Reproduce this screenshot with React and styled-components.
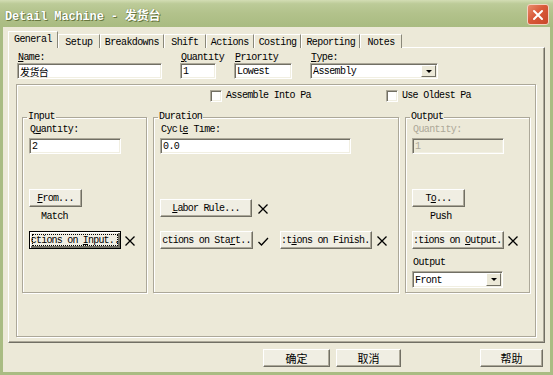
import React from "react";
import styled, { createGlobalStyle, css } from "styled-components";

const UI_FONT = `"Liberation Mono", "Noto Sans CJK SC", monospace`;
const CJK_FONT = `"Noto Sans CJK SC", "Noto Sans", sans-serif`;

const GlobalStyle = createGlobalStyle`
  html, body {
    margin: 0;
    padding: 0;
    background: #ece9d8;
  }
  body {
    font-family: ${UI_FONT};
    font-size: 10px;
  }
  * {
    box-sizing: border-box;
  }
`;

const Window = styled.div`
  width: 553px;
  height: 375px;
  display: flex;
  flex-direction: column;
  overflow: hidden;
`;

const TitleBar = styled.div`
  height: 27px;
  flex: none;
  display: flex;
  align-items: center;
  justify-content: space-between;
  padding: 2px 4px 0 5px;
  background: linear-gradient(
    to bottom,
    #d3ddb4 0%,
    #bccb98 14%,
    #b2c28b 50%,
    #a9bb81 100%
  );
`;

const Title = styled.div`
  font: bold 12px ${UI_FONT};
  letter-spacing: -0.15px;
  color: #fff;
  text-shadow: 1px 1px 0 #67773f, 0 0 1px #67773f;
`;

const CloseButton = styled.div`
  width: 22px;
  height: 21px;
  border-radius: 3px;
  border: 1px solid #f4d2c2;
  background: linear-gradient(135deg, #e88d6d 0%, #d95a3a 45%, #c9462a 100%);
  display: flex;
  align-items: center;
  justify-content: center;
`;

const Frame = styled.div`
  flex: 1;
  display: flex;
  flex-direction: column;
  background: #ece9d8;
  border: 3px solid #a9bc83;
  border-top: none;
  padding: 4px 5px 0 5px;
`;

const TabStrip = styled.div`
  display: flex;
  align-items: flex-end;
  height: 17px;
  margin-bottom: -1px;
  position: relative;
  z-index: 1;
`;

const Tab = styled.div`
  height: ${(p) => (p.$active ? 17 : 14)}px;
  min-width: 42px;
  padding: ${(p) => (p.$active ? "0 5px 2px" : "1px 4px 0")};
  display: flex;
  align-items: center;
  justify-content: center;
  background: #ece9d8;
  border: 1px solid;
  border-color: #fff #8a887a transparent #fff;
  border-bottom: none;
  white-space: nowrap;
  letter-spacing: -0.6px;
  color: #000;
`;

const TabPanel = styled.div`
  height: 296px;
  border: 1px solid;
  border-color: #fff #716f64 #716f64 #fff;
  box-shadow: inset -1px -1px 0 #aca899;
  padding: 5px 8px 0 7px;
`;

const FieldRow = styled.div`
  display: flex;
  gap: 18px;
  padding-left: 1px;
`;

const Field = styled.div`
  display: flex;
  flex-direction: column;
  width: ${(p) => p.$w}px;
`;

const Label = styled.div`
  height: ${(p) => (p.$clip ? 9 : 10)}px;
  margin-bottom: ${(p) => (p.$clip ? 1 : 0)}px;
  line-height: 10px;
  padding-left: 1px;
  white-space: nowrap;
  overflow-x: visible;
  overflow-y: clip;
  letter-spacing: -0.6px;
  color: ${(p) => (p.$disabled ? "#aca899" : "#000")};
  margin-top: ${(p) => p.$top || 0}px;
`;

const sunken = css`
  border: 1px solid;
  border-color: #aca899 #fff #fff #aca899;
  box-shadow: inset 1px 1px 0 #716f64, inset -1px -1px 0 #f1efe2;
`;

const TextInput = styled.input`
  ${sunken};
  width: ${(p) => p.$w || "100%"};
  height: 16px;
  margin: ${(p) => p.$top || 0}px 0 0;
  padding: 1px 2px 0;
  font: 10px ${UI_FONT};
  letter-spacing: -0.6px;
  color: ${(p) => (p.disabled ? "#aca899" : "#000")};
  background: ${(p) => (p.disabled ? "#ece9d8" : "#fff")};
  outline: none;
  &:disabled {
    -webkit-text-fill-color: #aca899;
  }
`;

const Select = styled.div`
  ${sunken};
  width: ${(p) => p.$w || "100%"};
  height: ${(p) => p.$h || 17}px;
  margin-top: ${(p) => p.$top || 0}px;
  display: flex;
  align-items: center;
  background: #fff;
  padding: 0 1px 0 2px;
  letter-spacing: -0.6px;
`;

const SelectValue = styled.span`
  flex: 1;
  padding-top: 1px;
`;

const SelectArrow = styled.span`
  width: 15px;
  height: calc(100% - 2px);
  display: flex;
  align-items: center;
  justify-content: center;
  background: #ece9d8;
  border: 1px solid;
  border-color: #fff #716f64 #716f64 #fff;
  &::after {
    content: "";
    border-left: 3px solid transparent;
    border-right: 3px solid transparent;
    border-top: 3px solid #000;
  }
`;

const BigBox = styled.div`
  margin-top: 5px;
  height: 253px;
  border: 1px solid #aca899;
  box-shadow: inset 1px 1px 0 #fff, 1px 1px 0 #fff;
  padding: 5px 5px 0 5px;
`;

const CheckRow = styled.div`
  display: grid;
  grid-template-columns: 176px auto;
  padding-left: 188px;
  height: 12px;
`;

const Check = styled.div`
  display: flex;
  align-items: center;
  gap: 4px;
  white-space: nowrap;
  letter-spacing: -0.7px;
  line-height: 12px;
`;

const CheckBox = styled.span`
  ${sunken};
  width: 12px;
  height: 12px;
  background: #fff;
  flex: none;
`;

const GroupRow = styled.div`
  display: flex;
  gap: 6px;
  margin-top: 10px;
`;

const Group = styled.fieldset`
  margin: 0;
  padding: 0 6px;
  min-width: 0;
  width: ${(p) => p.$w}px;
  height: 181px;
  border: 1px solid #aca899;
  box-shadow: inset 1px 1px 0 #fff, 1px 1px 0 #fff;
  display: flex;
  flex-direction: column;
  align-items: flex-start;
`;

const Legend = styled.legend`
  padding: 0 1px;
  margin-left: -2px;
  line-height: 10px;
  height: 10px;
  letter-spacing: -0.6px;
  color: #000;
`;

const Button = styled.button`
  width: ${(p) => p.$w}px;
  height: 18px;
  flex: none;
  margin: ${(p) => p.$top || 0}px 0 0;
  padding: 0;
  font: 10px ${UI_FONT};
  letter-spacing: -0.8px;
  color: #000;
  background: #f0eee3;
  border: 1px solid;
  border-color: #fff #716f64 #716f64 #fff;
  box-shadow: inset -1px -1px 0 #aca899;
  white-space: nowrap;
  overflow: hidden;
  ${(p) =>
    p.$focused &&
    css`
      border-color: #000;
      box-shadow: inset 1px 1px 0 #fff, inset -2px -2px 0 #716f64;
      outline: 1px dotted #000;
      outline-offset: -4px;
    `}
`;

const Caption = styled.div`
  margin: 5px 0 0 ${(p) => p.$left}px;
  line-height: 10px;
  letter-spacing: -0.6px;
`;

const ActionRow = styled.div`
  display: flex;
  align-items: center;
  margin-top: ${(p) => p.$top}px;
`;

const Mark = styled.svg`
  width: 12px;
  height: 12px;
  flex: none;
  margin: 2px ${(p) => p.$after || 0}px 0 ${(p) => p.$before || 4}px;
`;

const ButtonBar = styled.div`
  display: flex;
  gap: 6px;
  margin-top: 6px;
  padding: 0 2px 0 255px;
`;

const DialogButton = styled(Button)`
  font: 11px ${CJK_FONT};
  letter-spacing: 0;
  margin-left: ${(p) => (p.$push ? "auto" : 0)};
`;

const XMark = (props) => (
  <Mark viewBox="0 0 12 12" {...props}>
    <path d="M1.5 1.5 L10.5 10.5 M10.5 1.5 L1.5 10.5" stroke="#000" strokeWidth="1.3" fill="none" />
  </Mark>
);

const CheckMark = (props) => (
  <Mark viewBox="0 0 12 12" {...props}>
    <path d="M1.5 7 L4.5 10 L11 3" stroke="#000" strokeWidth="1.3" fill="none" />
  </Mark>
);

const tabs = ["General", "Setup", "Breakdowns", "Shift", "Actions", "Costing", "Reporting", "Notes"];

export default function App() {
  return (
    <Window>
      <GlobalStyle />
      <TitleBar>
        <Title>Detail Machine - 发货台</Title>
        <CloseButton>
          <svg width="12" height="12" viewBox="0 0 12 12">
            <path d="M2 2 L10 10 M10 2 L2 10" stroke="#fff" strokeWidth="2" strokeLinecap="round" />
          </svg>
        </CloseButton>
      </TitleBar>
      <Frame>
        <TabStrip>
          {tabs.map((t, i) => (
            <Tab key={t} $active={i === 0}>
              {t}
            </Tab>
          ))}
        </TabStrip>
        <TabPanel>
          <FieldRow>
            <Field $w={145}>
              <Label>
                <u>N</u>ame:
              </Label>
              <TextInput readOnly value="发货台" />
            </Field>
            <Field $w={36}>
              <Label $clip>
                <u>Q</u>uantity
              </Label>
              <TextInput readOnly value="1" />
            </Field>
            <Field $w={58}>
              <Label $clip>
                <u>P</u>riority
              </Label>
              <TextInput readOnly value="Lowest" />
            </Field>
            <Field $w={128}>
              <Label>
                <u>T</u>ype:
              </Label>
              <Select $h={16}>
                <SelectValue>Assembly</SelectValue>
                <SelectArrow />
              </Select>
            </Field>
          </FieldRow>
          <BigBox>
            <CheckRow>
              <Check>
                <CheckBox />
                Assemble Into Pa
              </Check>
              <Check>
                <CheckBox />
                Use Oldest Pa
              </Check>
            </CheckRow>
            <GroupRow>
              <Group $w={125}>
                <Legend>Input</Legend>
                <Label $top={3}>
                  Q<u>u</u>antity:
                </Label>
                <TextInput readOnly value="2" $w="92px" $top={3} />
                <Button $w={53} $top={35}>
                  <u>F</u>rom...
                </Button>
                <Caption $left={12}>Match</Caption>
                <ActionRow $top={9}>
                  <Button $w={92} $focused>
                    ctions on <u>I</u>nput..
                  </Button>
                  <XMark $before={3} />
                </ActionRow>
              </Group>
              <Group $w={246}>
                <Legend>Duration</Legend>
                <Label $top={3}>
                  Cycl<u>e</u> Time:
                </Label>
                <TextInput readOnly value="0.0" $w="191px" $top={3} />
                <ActionRow $top={45}>
                  <Button $w={92}>
                    <u>L</u>abor Rule...
                  </Button>
                  <XMark $before={5} />
                </ActionRow>
                <ActionRow $top={14}>
                  <Button $w={93}>
                    ctions on Sta<u>r</u>t..
                  </Button>
                  <CheckMark $after={11} />
                  <Button $w={92}>
                    :t<u>i</u>ons on Finish..
                  </Button>
                  <XMark />
                </ActionRow>
              </Group>
              <Group $w={125}>
                <Legend>Output</Legend>
                <Label $top={3} $disabled>
                  Quantity:<u> </u>
                </Label>
                <TextInput disabled value="1" $w="92px" $top={3} />
                <Button $w={53} $top={35}>
                  T<u>o</u>...
                </Button>
                <Caption $left={18}>Push</Caption>
                <ActionRow $top={9}>
                  <Button $w={92}>
                    :tions on <u>O</u>utput..
                  </Button>
                  <XMark $before={3} />
                </ActionRow>
                <Label $top={9}>Output</Label>
                <Select $w="91px" $top={3}>
                  <SelectValue>Front</SelectValue>
                  <SelectArrow />
                </Select>
              </Group>
            </GroupRow>
          </BigBox>
        </TabPanel>
        <ButtonBar>
          <DialogButton $w={67}>确定</DialogButton>
          <DialogButton $w={65}>取消</DialogButton>
          <DialogButton $w={63} $push>
            帮助
          </DialogButton>
        </ButtonBar>
      </Frame>
    </Window>
  );
}
